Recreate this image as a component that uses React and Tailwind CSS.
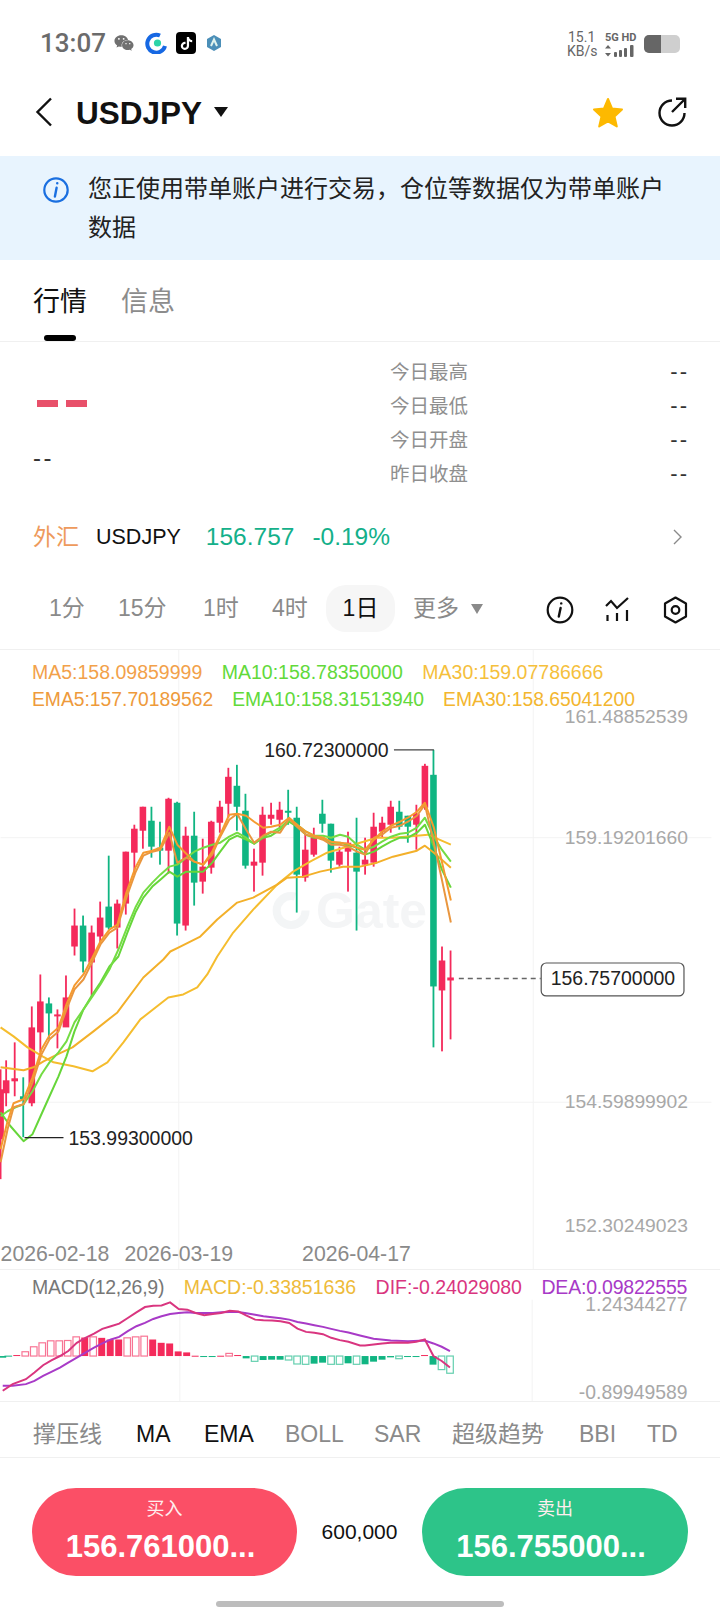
import { FaTiktok, FaWeixin } from "react-icons/fa"

const RED = "#f42a5b"
const GREEN = "#10b582"

// [k, wickTop, wickBottom, bodyTop, bodyBottom, isRed]  k = 53..0, x is 450.7 - 8.56k
const candles = [
  [53, 1070, 1180, 1090, 1140, 1], [52, 1061, 1107, 1081, 1094, 1], [51, 1043, 1097, 1079, 1082, 1],
  [50, 1078, 1138, 1097, 1100, 0], [49, 1007, 1107, 1028, 1104, 1], [48, 975, 1053, 1002, 1033, 1],
  [47, 998, 1040, 1004, 1014, 0], [46, 1010, 1049, 1015, 1017, 1], [45, 976, 1022, 998, 1028, 1],
  [44, 909, 956, 926, 947, 1], [43, 916, 973, 926, 962, 0], [42, 926, 996, 933, 963, 1],
  [41, 902, 943, 918, 937, 1], [40, 856, 930, 907, 928, 0], [39, 900, 949, 904, 928, 1],
  [38, 852, 915, 852, 904, 1], [37, 825, 874, 829, 853, 1], [36, 807, 849, 807, 831, 1],
  [35, 807, 858, 821, 847, 0], [34, 822, 865, 848, 851, 0], [33, 798, 874, 799, 851, 1],
  [32, 802, 936, 803, 924, 0], [31, 827, 931, 836, 926, 1], [30, 812, 906, 836, 883, 0],
  [29, 839, 894, 867, 882, 1], [28, 821, 874, 822, 868, 1], [27, 801, 833, 807, 823, 1],
  [26, 768, 818, 777, 804, 1], [25, 765, 831, 786, 807, 0], [24, 794, 869, 811, 866, 0],
  [23, 849, 892, 862, 866, 1], [22, 807, 876, 815, 863, 1], [21, 803, 825, 815, 819, 1],
  [20, 802, 828, 810, 820, 1], [19, 790, 825, 811, 813, 0], [18, 807, 913, 818, 875, 0],
  [17, 833, 882, 850, 878, 1], [16, 828, 857, 838, 855, 1], [15, 800, 833, 814, 824, 0],
  [14, 824, 873, 824, 861, 0], [13, 847, 867, 852, 865, 1], [12, 832, 892, 843, 852, 1],
  [11, 818, 931, 853, 872, 0], [10, 838, 875, 860, 865, 1], [9, 813, 867, 827, 863, 1],
  [8, 817, 838, 823, 832, 1], [7, 801, 833, 807, 825, 1], [6, 801, 830, 812, 827, 0],
  [5, 816, 843, 816, 827, 0], [4, 805, 850, 814, 825, 1], [3, 764, 810, 766, 808, 1],
  [2, 750, 1048, 775, 987, 0], [1, 947, 1052, 961, 991, 1], [0, 951, 1040, 978, 981, 1],
]

const maLines = [
  {
    color: "#f5bd2e",
    pts: "0,1028 13,1037 27,1048 42,1057 53,1063 73,1067 92,1072 107,1063 123,1043 140,1020 168,998 183,995 197,988 207,975 217,957 233,933 253,910 277,885 293,872 310,862 327,853 347,847 360,843 377,838 393,838 417,836 428,835 451,845",
  },
  {
    color: "#f3b02a",
    pts: "0,1068 23,1071 33,1068 43,1062 57,1055 72,1048 93,1032 117,1013 143,978 163,960 170,952 178,948 200,937 217,920 237,903 253,898 277,885 287,878 303,877 320,872 343,867 360,867 377,863 393,857 417,851 425,846 434,853 451,868",
  },
  {
    color: "#66d63a",
    pts: "0,1113 10,1127 23,1142 32,1135 40,1117 49,1097 58,1077 66,1057 74,1032 83,1010 92,995 100,983 109,967 118,957 127,933 135,913 143,898 152,887 160,880 169,872 177,877 186,872 194,872 203,872 212,863 220,852 229,840 237,836 246,840 254,844 263,838 271,836 280,830 289,822 297,827 306,835 314,838 323,838 331,843 340,843 348,845 357,848 365,855 374,852 382,847 391,842 400,838 408,838 417,833 425,825 434,847 442,870 451,888",
  },
  {
    color: "#74dc44",
    pts: "0,1117 7,1112 15,1108 23,1105 32,1092 41,1075 49,1063 58,1053 66,1042 74,1023 83,1010 92,997 100,985 109,970 118,950 127,927 135,908 143,893 152,883 160,875 169,867 177,865 186,858 194,852 203,848 212,845 220,843 229,837 237,833 246,838 254,844 263,837 271,833 280,828 289,820 297,825 306,832 314,836 323,836 331,838 340,835 348,837 357,845 365,850 374,847 382,842 391,837 400,834 408,833 417,828 425,818 434,837 442,850 451,862",
  },
  {
    color: "#e9963f",
    pts: "0,1163 7,1130 13,1108 23,1105 32,1083 41,1055 49,1040 58,1032 66,1010 74,990 83,980 92,962 100,945 109,933 117,928 126,898 135,873 143,856 152,852 160,850 169,833 177,863 186,858 194,862 203,865 212,855 220,837 229,820 237,814 246,830 254,843 263,836 271,832 280,833 289,819 297,827 306,835 314,837 323,840 331,845 340,845 348,847 357,852 365,855 374,838 382,835 391,828 400,826 408,822 417,816 425,805 434,843 442,880 451,923",
  },
  {
    color: "#f59a2f",
    pts: "0,1150 7,1122 13,1104 23,1100 32,1078 41,1050 49,1036 58,1028 66,1005 74,986 83,975 92,958 100,942 109,930 117,925 126,893 135,868 143,853 152,851 160,848 169,827 177,845 186,854 194,862 203,865 212,852 220,835 229,815 237,814 246,816 254,822 263,828 271,827 280,825 289,818 297,825 306,832 314,836 323,838 331,842 340,843 348,844 357,848 365,850 374,840 382,832 391,826 400,822 408,818 417,812 425,803 434,828 442,862 451,901",
  },
]

// histogram from the 3x crop: [height in crop px, hollow] + is up, - is down
const bars = [
  [-5, 0], [-1, 1], [3, 0], [13, 1], [28, 1], [40, 1], [46, 1], [46, 1], [47, 1], [58, 1], [56, 0], [58, 1], [55, 0],
  [50, 0], [50, 0], [55, 1], [58, 1], [60, 1], [50, 0], [40, 0], [38, 0], [14, 0], [11, 0], [1, 0], [-2, 0], [-2, 0],
  [1, 0], [8, 1], [3, 0], [-7, 0], [-16, 1], [-12, 0], [-11, 0], [-11, 0], [-12, 1], [-24, 1], [-25, 1], [-23, 0],
  [-20, 0], [-25, 1], [-25, 1], [-22, 0], [-25, 1], [-25, 0], [-17, 0], [-11, 0], [-4, 0], [-8, 1], [-3, 0], [-3, 0],
  [3, 0], [-26, 0], [-41, 1], [-52, 1],
]

const cropPts = (x0, y0, pts) => pts.map(([x, y]) => `${x0 + x / 3},${y0 + y / 3}`).join(" ")

const dif = cropPts(0, 1260, [[0, 395], [30, 375], [70, 360], [96, 340], [122, 318], [147, 303], [173, 290], [198, 275], [224, 250], [250, 235], [276, 222], [301, 208], [327, 200], [352, 192], [378, 175], [404, 158], [430, 142], [455, 138], [480, 137], [506, 128], [532, 148], [558, 150], [583, 160], [609, 167], [635, 163], [660, 160], [686, 153], [712, 155], [737, 168], [763, 180], [788, 182], [814, 183], [840, 185], [866, 190], [891, 207], [917, 217], [942, 220], [968, 224], [993, 235], [1019, 242], [1045, 247], [1080, 258], [1095, 258], [1121, 255], [1147, 252], [1173, 250], [1199, 249], [1225, 250], [1250, 247], [1276, 240], [1302, 290], [1327, 305], [1352, 325]])
const dea = cropPts(0, 1260, [[0, 380], [30, 380], [70, 375], [96, 365], [122, 350], [147, 338], [173, 325], [198, 310], [224, 295], [250, 280], [276, 265], [301, 252], [327, 240], [352, 232], [378, 215], [404, 200], [430, 190], [455, 178], [480, 170], [506, 163], [532, 160], [558, 158], [583, 160], [609, 160], [635, 160], [660, 158], [686, 157], [712, 157], [737, 161], [763, 165], [788, 170], [814, 173], [840, 176], [866, 180], [891, 187], [917, 192], [942, 197], [968, 202], [993, 208], [1019, 214], [1045, 219], [1080, 228], [1121, 238], [1173, 243], [1225, 245], [1276, 243], [1302, 252], [1327, 262], [1352, 275]])

// the oldest candle is cut by the left edge
const xOf = (k) => Math.max(450.7 - 8.56 * k, 0)

const MainChart = () => (
  <svg className="absolute inset-0 h-full w-full overflow-visible" viewBox="0 650 720 620">
    <g stroke="#f3f3f3" strokeWidth="1">
      <line x1="0" x2="712" y1="838" y2="838" />
      <line x1="0" x2="712" y1="1103" y2="1103" />
      <line x1="178.5" x2="178.5" y1="650" y2="1270" />
      <line x1="533.5" x2="533.5" y1="650" y2="1270" />
    </g>
    <circle cx="291" cy="911" r="14.5" fill="none" stroke="#f3f5f6" strokeWidth="8" strokeDasharray="72 20" />
    <text x="316" y="928" fontSize="50" fontWeight="700" fill="#f4f5f6">Gate</text>
    {candles.map(([k, wt, wb, bt, bb, up]) => (
      <g key={k} fill={up ? RED : GREEN}>
        <rect x={xOf(k) - 0.9} y={wt} width="1.8" height={wb - wt} />
        <rect x={xOf(k) - 3.3} y={bt} width="6.6" height={Math.max(bb - bt, 2)} />
      </g>
    ))}
    {maLines.map((l) => (
      <polyline key={l.color} points={l.pts} fill="none" stroke={l.color} strokeWidth="2" strokeLinejoin="round" />
    ))}
    <g fontSize="19.3" fill="#a8a8a8" textAnchor="end">
      <text x="688.5" y="723">161.48852539</text>
      <text x="688.5" y="844">159.19201660</text>
      <text x="688.5" y="1109">154.59899902</text>
      <text x="688.5" y="1233">152.30249023</text>
    </g>
    <g fontSize="21.3" fill="#8a8a8a">
      <text x="0" y="1262">2026-02-18</text>
      <text x="124" y="1262">2026-03-19</text>
      <text x="302" y="1262">2026-04-17</text>
    </g>
    <g fontSize="19.5" fill="#222">
      <text x="264" y="757">160.72300000</text>
      <text x="68" y="1146">153.99300000</text>
      <text x="551" y="986">156.75700000</text>
    </g>
    <polyline points="394,750 434,750" stroke="#444" strokeWidth="1.2" fill="none" />
    <line x1="24" x2="63" y1="1138.5" y2="1138.5" stroke="#222" strokeWidth="1.2" />
    <line x1="459" x2="541" y1="979" y2="979" stroke="#666" strokeWidth="1.4" strokeDasharray="5 4" />
    <rect x="541.5" y="963.5" width="143" height="33" rx="5" fill="none" stroke="#555" strokeWidth="1.2" />
  </svg>
)

const MacdChart = () => (
  <svg className="absolute inset-0 h-full w-full overflow-visible" viewBox="0 1270 720 132">
    <line x1="178.5" x2="178.5" y1="1300" y2="1402" stroke="#f3f3f3" />
    <line x1="533.5" x2="533.5" y1="1300" y2="1402" stroke="#f3f3f3" />
    {bars.map(([h, hollow], i) => {
      const k = 53 - i
      const color = h > 0 ? RED : GREEN
      const height = Math.abs(h) / 3
      const top = h > 0 ? 1356.7 - height : 1356.7
      if (hollow) {
        return <rect key={k} x={xOf(k) - 3.3} y={top} width="6.6" height={height} fill="none" stroke={color} strokeOpacity="0.65" strokeWidth="1.2" />
      }
      return <rect key={k} x={xOf(k) - 3.5} y={top} width="7" height={Math.max(height, 1)} fill={color} />
    })}
    <polyline points={dea} fill="none" stroke="#a83ac7" strokeWidth="2" />
    <polyline points={dif} fill="none" stroke="#d9357f" strokeWidth="2" />
    <g fontSize="19.5" fill="#a8a8a8" textAnchor="end">
      <text x="690" y="1311">1.24344277</text>
      <text x="690" y="1400">-0.89949589</text>
    </g>
  </svg>
)

const StatusBar = () => (
  <div className="flex h-[86px] items-center justify-between pl-[40px] pr-[40px]">
    <div className="flex items-center">
      <span className="w-[74px] font-['Roboto'] text-[26px] font-medium text-[#6b6b6b]">13:07</span>
      <FaWeixin className="h-[20px] w-[20px] text-[#707070]" />
      <svg className="ml-[11px] h-[22px] w-[22px]" viewBox="0 0 22 22">
        <path d="M15 3.5 A9 9 0 1 0 20 14" fill="none" stroke="#1668e3" strokeWidth="4" />
        <circle cx="12.5" cy="11" r="3.6" fill="#2dd4a8" />
      </svg>
      <span className="ml-[9px] flex h-[22px] w-[20px] items-center justify-center rounded-[4px] bg-black">
        <FaTiktok className="h-[13px] w-[13px] text-white" />
      </span>
      <svg className="ml-[10px] h-[18px] w-[16px]" viewBox="0 0 16 18">
        <path d="M8 1 L15 5 V13 L8 17 L1 13 V5 Z" fill="#4b8fb8" />
        <path d="M5 12 L8 5.5 L11 12" fill="none" stroke="#dff3ee" strokeWidth="2" />
      </svg>
    </div>
    <div className="mt-[2px] flex items-center">
      <div className="flex w-[38px] flex-col font-['Roboto'] text-[14px] leading-[14px] text-[#666]">
        <span className="ml-[1px]">15.1</span>
        <span>KB/s</span>
      </div>
      <div className="flex w-[39px] flex-col">
        <span className="font-['Roboto'] text-[11px] leading-[13px] font-bold whitespace-nowrap text-[#666]">5G HD</span>
        <svg className="mt-[1px] h-[12px] w-[32px]" viewBox="0 0 32 12" fill="#666">
          <path d="M3 0 L6 3.5 H0 Z M3 11.5 L0 8 H6 Z" />
          <rect x="9" y="7" width="3" height="5" rx="1" />
          <rect x="14" y="5" width="3" height="7" rx="1" />
          <rect x="19" y="3" width="3" height="9" rx="1" />
          <rect x="25" y="0" width="3.5" height="12" rx="1" />
        </svg>
      </div>
      <div className="flex h-[18px] w-[36px] overflow-hidden rounded-[5px] bg-[#cfcfcf]">
        <div className="h-full w-[17px] bg-[#666]" />
      </div>
    </div>
  </div>
)

const Header = () => (
  <div className="flex h-[70px] items-center pr-[33px] pb-[18px] pl-[35px]">
    <svg className="h-[30px] w-[18px]" viewBox="0 0 18 30">
      <path d="M16 1.5 L2.5 15 L16 28.5" fill="none" stroke="#111" strokeWidth="2.4" />
    </svg>
    <span className="mt-[4px] ml-[23px] text-[31.5px] font-bold text-[#111]">USDJPY</span>
    <svg className="ml-[12px] h-[10px] w-[14px]" viewBox="0 0 14 10">
      <path d="M0 0 H14 L7 10 Z" fill="#111" />
    </svg>
    <svg className="mt-[2px] ml-auto h-[34px] w-[34px]" viewBox="0 0 34 34">
      <path d="M17 3 L21 12.5 L31 13.5 L23.5 20.5 L25.8 30.5 L17 25.5 L8.2 30.5 L10.5 20.5 L3 13.5 L13 12.5 Z" fill="#fdb900" stroke="#fdb900" strokeWidth="2" strokeLinejoin="round" />
    </svg>
    <svg className="ml-[32px] h-[30px] w-[30px]" viewBox="0 0 30 30">
      <path d="M15 3.5 A12.5 12.5 0 1 0 27.5 16" fill="none" stroke="#111" strokeWidth="2.4" />
      <path d="M15 15 L27.5 2.5 M19 1.8 H28.2 V11" fill="none" stroke="#111" strokeWidth="2.4" />
    </svg>
  </div>
)

const Banner = () => (
  <div className="flex h-[104px] bg-[#e8f4fe] pt-[13px] pr-[50px] pl-[43px]">
    <svg className="mt-[8px] h-[26px] w-[26px] shrink-0" viewBox="0 0 26 26">
      <circle cx="13" cy="13" r="11.7" fill="none" stroke="#1a6fe0" strokeWidth="2.2" />
      <path d="M14.2 6.2 h0.1 M13.6 10.8 L11.9 19.5" fill="none" stroke="#1a6fe0" strokeWidth="2.4" strokeLinecap="round" />
    </svg>
    <p className="ml-[19px] text-[24px] leading-[39px] text-[#222]">您正使用带单账户进行交易，仓位等数据仅为带单账户数据</p>
  </div>
)

const Tabs = () => (
  <div className="flex h-[82px] gap-[34px] border-b border-[#f0f0f0] pt-[24px] pl-[33px]">
    <div className="flex flex-col items-center">
      <span className="text-[27px] leading-[36px] text-[#111]">行情</span>
      <div className="mt-[15px] h-[6px] w-[32px] rounded-[3px] bg-black" />
    </div>
    <span className="text-[27px] leading-[36px] text-[#8c8c8c]">信息</span>
  </div>
)

const statRows = ["今日最高", "今日最低", "今日开盘", "昨日收盘"]

const Stats = () => (
  <div className="flex h-[168px] pt-[14px] pr-[33px] pl-[33px]">
    <div className="w-[357px]">
      <div className="mt-[44px] ml-[4px] flex gap-[8px]">
        <div className="h-[7px] w-[21px] bg-[#e8506a]" />
        <div className="h-[7px] w-[21px] bg-[#e8506a]" />
      </div>
      <div className="mt-[37px] text-[24px] leading-[28px] tracking-[2.5px] text-[#333]">--</div>
    </div>
    <div className="flex-1">
      {statRows.map((label) => (
        <div key={label} className="flex h-[34px] items-center justify-between">
          <span className="text-[19.5px] text-[#8f8f8f]">{label}</span>
          <span className="mr-[-2px] mb-[4px] text-[22px] tracking-[2px] text-[#333]">--</span>
        </div>
      ))}
    </div>
  </div>
)

const SymbolRow = () => (
  <div className="flex h-[54px] items-center pr-[38px] pl-[33px]">
    <span className="text-[23px] text-[#ee9a5c]">外汇</span>
    <span className="ml-[17px] text-[21.5px] text-[#111]">USDJPY</span>
    <span className="ml-[25px] text-[24.5px] text-[#14b08a]">156.757</span>
    <span className="ml-[18px] text-[24.5px] text-[#14b08a]">-0.19%</span>
    <svg className="ml-auto h-[16px] w-[9px]" viewBox="0 0 9 16">
      <path d="M1 1 L8 8 L1 15" fill="none" stroke="#8a8a8a" strokeWidth="1.4" />
    </svg>
  </div>
)

const Timeframes = () => (
  <div className="flex h-[86px] border-b border-[#f0f0f0] pt-[21px] pl-[49px]">
    <div className="flex h-[47px] w-[497px] items-center text-[23px] text-[#8a8a8a]">
      <span className="w-[69px]">1分</span>
      <span className="w-[85px]">15分</span>
      <span className="w-[69px]">1时</span>
      <span className="w-[54px]">4时</span>
      <span className="flex h-[47px] w-[69px] items-center justify-center rounded-[20px] bg-[#f6f6f6] text-[#111]">1日</span>
      <span className="ml-[18px]">更多</span>
      <svg className="ml-[12px] h-[10px] w-[12px]" viewBox="0 0 12 10">
        <path d="M0 0 H12 L6 10 Z" fill="#8a8a8a" />
      </svg>
    </div>
    <svg className="mt-[11px] h-[28px] w-[28px] shrink-0" viewBox="0 0 28 28">
      <circle cx="14" cy="14" r="12.3" fill="none" stroke="#111" strokeWidth="2.2" />
      <path d="M15.2 7.4 h0.1 M14.6 12 L12.8 20.5" fill="none" stroke="#111" strokeWidth="2.4" strokeLinecap="round" />
    </svg>
    <svg className="mt-[12px] ml-[31px] h-[25px] w-[25px] shrink-0" viewBox="0 0 25 25">
      <path d="M1 9 L6 4 L12 11 L23 1" fill="none" stroke="#111" strokeWidth="2.2" />
      <path d="M2.5 18 V24 M12 16 V24 M22 13 V24" fill="none" stroke="#111" strokeWidth="2.2" />
    </svg>
    <svg className="mt-[11px] ml-[33px] h-[28px] w-[25px] shrink-0" viewBox="0 0 25 28">
      <path d="M12.5 1.5 L23 7.5 V20.5 L12.5 26.5 L2 20.5 V7.5 Z" fill="none" stroke="#111" strokeWidth="2.2" strokeLinejoin="round" />
      <circle cx="12.5" cy="14" r="3.8" fill="none" stroke="#111" strokeWidth="2.2" />
    </svg>
  </div>
)

const Legend = ({ items, className }) => (
  <div className={`flex whitespace-nowrap ${className}`}>
    {items.map(([text, color]) => (
      <span key={text} className={color}>{text}</span>
    ))}
  </div>
)

const ChartPanel = () => (
  <div className="relative h-[620px] border-b border-[#f0f0f0] pt-[9px] pl-[32px] leading-[27px]">
    <MainChart />
    <div className="relative">
      <Legend className="gap-[19.5px] text-[19.5px]" items={[["MA5:158.09859999", "text-[#f2a14a]"], ["MA10:158.78350000", "text-[#62d93a]"], ["MA30:159.07786666", "text-[#f5c03c]"]]} />
      <Legend className="gap-[19px] text-[19.3px]" items={[["EMA5:157.70189562", "text-[#ee9a3b]"], ["EMA10:158.31513940", "text-[#62d93a]"], ["EMA30:158.65041200", "text-[#f3b62f]"]]} />
    </div>
  </div>
)

const MacdPanel = () => (
  <div className="relative h-[132px] border-b border-[#f0f0f0] pt-[4px] pl-[32px] leading-[27px]">
    <MacdChart />
    <div className="relative">
      <Legend className="gap-[19.5px] text-[19.5px]" items={[["MACD(12,26,9)", "tracking-[-0.25px] text-[#777]"], ["MACD:-0.33851636", "text-[#eebb3a]"], ["DIF:-0.24029080", "text-[#d9357f]"], ["DEA:0.09822555", "tracking-[-0.2px] text-[#a83ac7]"]]} />
    </div>
  </div>
)

const indicators = [
  ["撑压线", "w-[103px]", "text-[#8a8a8a]"],
  ["MA", "w-[68px]", "text-[#111]"],
  ["EMA", "w-[81px]", "text-[#111]"],
  ["BOLL", "w-[89px]", "text-[#8a8a8a]"],
  ["SAR", "w-[78px]", "text-[#8a8a8a]"],
  ["超级趋势", "w-[127px]", "text-[#8a8a8a]"],
  ["BBI", "w-[68px]", "text-[#8a8a8a]"],
  ["TD", "", "text-[#8a8a8a]"],
]

const IndicatorBar = () => (
  <div className="flex h-[56px] items-center border-b border-[#f0f0f0] pt-[10px] pl-[33px] text-[23px] whitespace-nowrap">
    {indicators.map(([name, width, color]) => (
      <span key={name} className={`${width} ${color}`}>{name}</span>
    ))}
  </div>
)

const TradeButton = ({ bg, label, price, width }) => (
  <div className={`flex h-[88px] flex-col items-center rounded-[44px] pt-[8px] text-white ${bg} ${width}`}>
    <span className="text-[18px] leading-[26px] text-[#ffeeee]">{label}</span>
    <span className="mt-[5px] mr-[8px] text-[31px] leading-[40px] font-bold">{price}</span>
  </div>
)

const Footer = () => (
  <div className="flex h-[150px] flex-col items-center pt-[30px]">
    <div className="flex w-full items-center justify-between px-[32px]">
      <TradeButton bg="bg-[#fb4f66]" label="买入" price="156.761000..." width="w-[265px]" />
      <span className="text-[21px] text-[#111]">600,000</span>
      <TradeButton bg="bg-[#2dc489]" label="卖出" price="156.755000..." width="w-[266px]" />
    </div>
    <div className="mt-[25px] h-[6px] w-[288px] rounded-[3px] bg-[#bdbdbd]" />
  </div>
)

export default function App() {
  return (
    <div className="h-[1608px] w-[720px] overflow-hidden bg-white font-[family-name:'Liberation_Sans','Noto_Sans_CJK_SC',sans-serif]">
      <StatusBar />
      <Header />
      <Banner />
      <Tabs />
      <Stats />
      <SymbolRow />
      <Timeframes />
      <ChartPanel />
      <MacdPanel />
      <IndicatorBar />
      <Footer />
    </div>
  )
}
